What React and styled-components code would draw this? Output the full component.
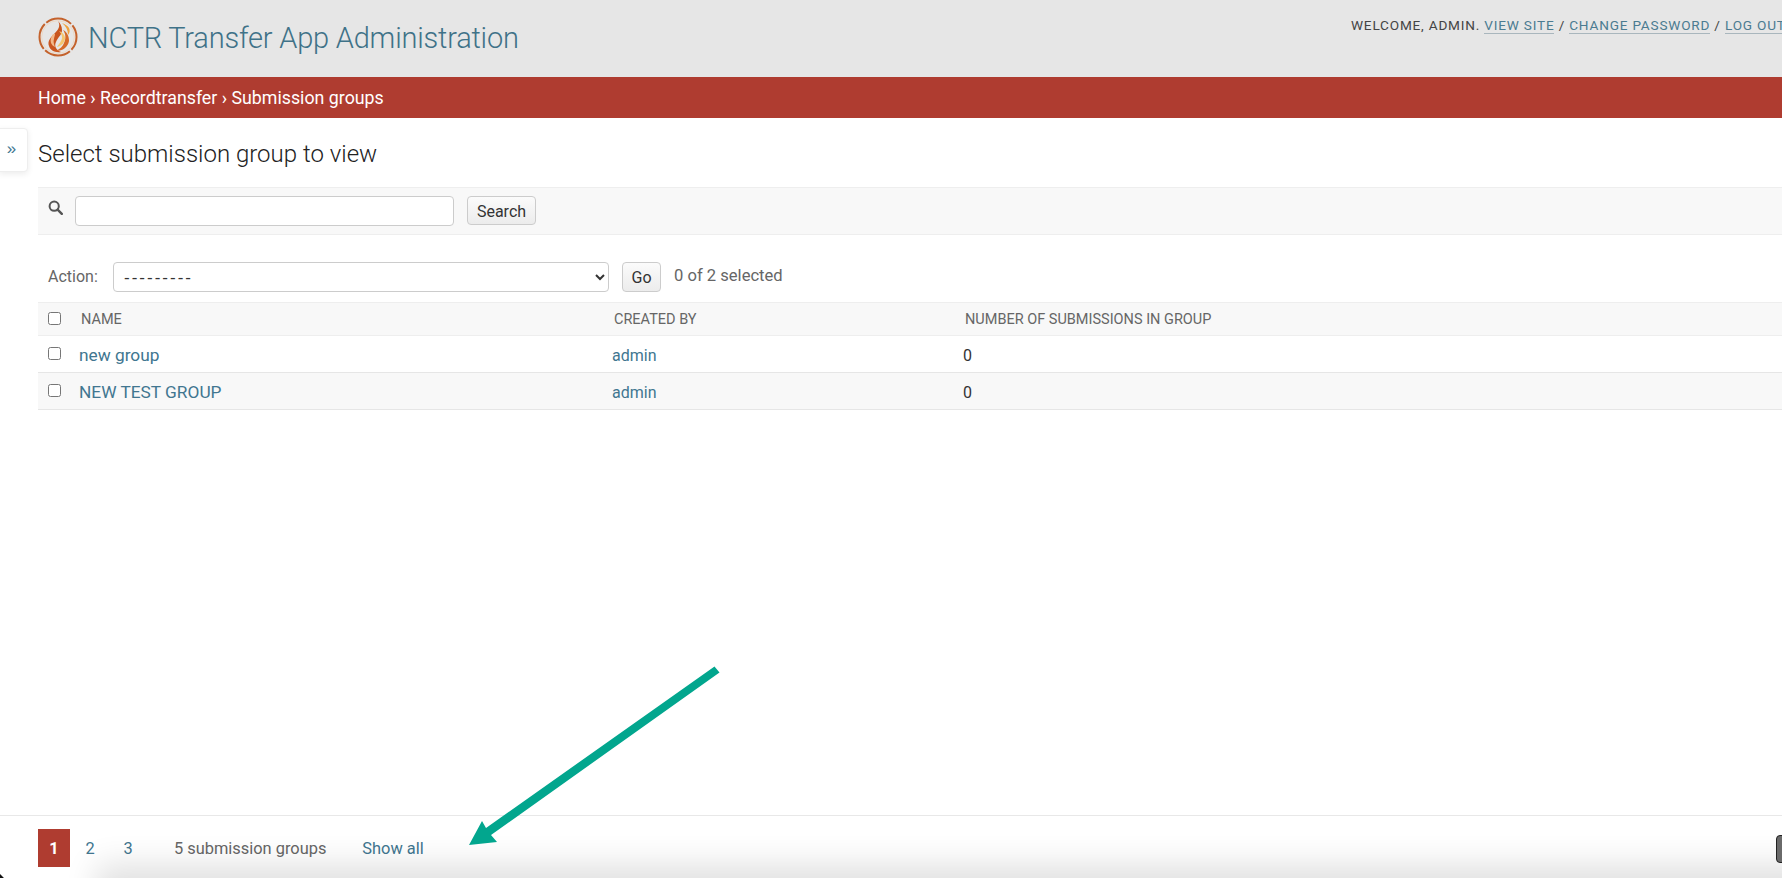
import React from "react";
import styled, { createGlobalStyle } from "styled-components";

const Global = createGlobalStyle`
  html, body {
    margin: 0;
    padding: 0;
    height: 100%;
    overflow: hidden;
    background: #fff;
  }
  body {
    font-family: Roboto, "Liberation Sans", Arial, sans-serif;
    color: #333;
  }
`;

const Page = styled.div`
  position: relative;
  width: 1782px;
  height: 878px;
  overflow: hidden;
  display: flex;
  flex-direction: column;
`;

const Header = styled.header`
  display: flex;
  flex: none;
  height: 77px;
  background: #e6e6e6;
  overflow: hidden;
`;

const Branding = styled.div`
  flex: 0 0 1351px;
  display: flex;
  align-items: flex-start;
  gap: 10px;
  padding: 17px 0 0 38px;
  box-sizing: border-box;
`;

const Title = styled.h1`
  margin: 1px 0 0;
  font-size: 29px;
  line-height: 40px;
  letter-spacing: -0.2px;
  font-weight: 300;
  color: #3f7288;
  white-space: nowrap;
`;

const UserTools = styled.div`
  flex: none;
  padding-top: 17px;
  font-size: 13.6px;
  line-height: 16px;
  letter-spacing: 0.8px;
  color: #444;
  white-space: nowrap;
`;

const ToolLink = styled.a`
  color: #4b7b91;
  border-bottom: 1px solid #a9b6bd;
`;

const Breadcrumbs = styled.nav`
  flex: none;
  height: 41px;
  display: flex;
  align-items: center;
  padding-left: 38px;
  background: #af3c30;
  color: #fff;
  font-size: 17.8px;
  white-space: nowrap;
`;

const Main = styled.main`
  position: relative;
  flex: 1;
  min-height: 0;
  display: flex;
  flex-direction: column;
`;

const SidebarToggle = styled.button`
  position: absolute;
  left: -1px;
  top: 10px;
  width: 29px;
  height: 44px;
  padding: 0 4px 2px 0;
  background: #fff;
  border: 1px solid #eee;
  border-radius: 0 4px 4px 0;
  box-shadow: 0 2px 6px rgba(0, 0, 0, 0.08);
  color: #417690;
  font-size: 17px;
  font-family: "Liberation Sans", Arial, sans-serif;
`;

const Content = styled.div`
  flex: 1;
  padding-left: 38px;
`;

const Heading = styled.h2`
  margin: 0;
  height: 69px;
  box-sizing: border-box;
  padding-top: 21px;
  font-size: 24px;
  line-height: 30px;
  font-weight: 300;
  color: #222;
`;

const Toolbar = styled.div`
  display: flex;
  align-items: flex-start;
  height: 48px;
  box-sizing: border-box;
  padding: 8px 0 0 10px;
  background: #f8f8f8;
  border-top: 1px solid #eee;
  border-bottom: 1px solid #eee;
`;

const SearchIcon = styled.svg`
  flex: none;
  width: 15px;
  height: 15px;
  margin: 4px 12px 0 0;
  color: #555;
`;

const SearchInput = styled.input`
  width: 379px;
  height: 30px;
  box-sizing: border-box;
  padding: 2px 8px;
  background: #fff;
  border: 1px solid #ccc;
  border-radius: 4px;
`;

const Button = styled.button`
  height: ${(p) => (p.$tall ? "30px" : "29px")};
  width: ${(p) => (p.$tall ? "39px" : "69px")};
  padding: ${(p) => (p.$tall ? "0" : "1px 0 0")};
  margin-left: 13px;
  background: linear-gradient(#fbfbfb, #ececec);
  border: 1px solid #ccc;
  border-radius: 4px;
  color: #333;
  font-family: Roboto, "Liberation Sans", Arial, sans-serif;
  font-size: 16px;
`;

const Actions = styled.div`
  display: flex;
  align-items: flex-start;
  height: 67px;
  box-sizing: border-box;
  padding: 27px 0 0 10px;
  color: #666;
  font-size: 16px;
`;

const ActionLabel = styled.label`
  width: 65px;
  line-height: 30px;
`;

const ActionSelect = styled.select`
  width: 496px;
  height: 30px;
  padding: 0 6px;
  background: #fff;
  border: 1px solid #ccc;
  border-radius: 4px;
  color: #333;
  font-family: "Liberation Sans", Arial, sans-serif;
  font-size: 17px;
  letter-spacing: 2px;
`;

const Counter = styled.span`
  margin: -1px 0 0 13px;
  font-size: 16.6px;
  line-height: 30px;
`;

const Table = styled.table`
  width: 100%;
  table-layout: fixed;
  border-collapse: collapse;
`;

const HeadCell = styled.th`
  box-sizing: border-box;
  height: 33px;
  padding: 0 0 0 ${(p) => (p.$text ? "2px" : "10px")};
  background: #f8f8f8;
  border-top: 1px solid #eee;
  border-bottom: 1px solid #eee;
  color: #666;
  font-size: 14.5px;
  font-weight: 400;
  text-align: left;
  text-transform: uppercase;
  width: ${(p) => p.$width || "auto"};
`;

const Row = styled.tr`
  background: ${(p) => (p.$alt ? "#f8f8f8" : "#fff")};
`;

const Cell = styled.td`
  box-sizing: border-box;
  height: 37px;
  padding: ${(p) => (p.$check ? "0 0 0 10px" : "2px 0 0")};
  border-bottom: 1px solid #e6e6e6;
  color: #333;
  font-size: 16px;
`;

const Check = styled.input`
  display: block;
  width: 13px;
  height: 13px;
  margin: -2px 0 0;
`;

const NameLink = styled.a`
  color: #417690;
  font-size: ${(p) => (p.$large ? "17.3px" : "16px")};
`;

const Pagination = styled.footer`
  flex: none;
  height: 63px;
  box-sizing: border-box;
  display: flex;
  align-items: flex-start;
  padding: 13px 0 0 38px;
  border-top: 1px solid #e8e8e8;
  font-size: 16.4px;
  line-height: 39px;
  color: #666;
`;

const CurrentPage = styled.span`
  width: 32px;
  height: 38px;
  margin-right: 1px;
  background: #af3c30;
  color: #fff;
  font-weight: 700;
  text-align: center;
`;

const PageLink = styled.a`
  width: 38px;
  color: #417690;
  text-align: center;
`;

const Count = styled.span`
  margin: 0 36px 0 27px;
`;

const ShowAll = styled.a`
  color: #417690;
`;

const Arrow = styled.svg`
  position: absolute;
  left: 0;
  top: 0;
  pointer-events: none;
`;

const BottomShade = styled.div`
  position: absolute;
  left: 110px;
  right: -80px;
  bottom: -24px;
  height: 24px;
  background: #ccc;
  box-shadow: 0 0 32px 14px rgba(0, 0, 0, 0.12);
  pointer-events: none;
`;

const DockEdge = styled.div`
  position: absolute;
  right: -8px;
  bottom: 15px;
  width: 12px;
  height: 26px;
  background: #6a6a6a;
  border: 1px solid #222;
  border-radius: 4px;
`;

const CornerMark = styled.div`
  position: absolute;
  left: -4px;
  bottom: -4px;
  width: 7px;
  height: 7px;
  background: #111;
  transform: rotate(45deg);
`;

function Logo() {
  return (
    <svg width="40" height="40" viewBox="0 0 40 40" style={{ flex: "none" }}>
      <circle cx="20" cy="20" r="18.5" fill="none" stroke="#c4622c" strokeWidth="2" strokeDasharray="27 2" strokeDashoffset="13" />
      <circle cx="20" cy="20" r="16.4" fill="none" stroke="#edd9c6" strokeWidth="1" />
      <path d="M20 4c3 5 0 9-3 12-4 4-8 8-6 13 1 4 6 7 12 6-5-2-7-6-5-10 2-5 6-7 6-12 0-4-2-7-4-9z" fill="#c9561f" />
      <path d="M25 13c3 4 3 9 1 13-1 3-4 6-8 8 7 0 12-4 13-10 0-5-2-9-6-11z" fill="#d66a28" />
      <path d="M24 6c4 3 6 7 6 12 2-2 2-5 1-7-1-2-4-4-7-5z" fill="#efa23f" />
      <path d="M21 14c3 3 4 7 2 10-1 2-3 4-4 6 5-1 8-5 8-9 0-3-3-6-6-7z" fill="#f5c670" />
      <path d="M15 17c-2 3-3 6-2 9 1 2 2 3 4 4-1-3-2-5-1-8 0-2 1-3 1-5z" fill="#f2b98a" />
    </svg>
  );
}

export default function App() {
  return (
    <Page>
      <Global />
      <Header>
        <Branding>
          <Logo />
          <Title>NCTR Transfer App Administration</Title>
        </Branding>
        <UserTools>
          WELCOME, ADMIN. <ToolLink>VIEW SITE</ToolLink> /{" "}
          <ToolLink>CHANGE PASSWORD</ToolLink> / <ToolLink>LOG OUT</ToolLink>
        </UserTools>
      </Header>
      <Breadcrumbs>Home › Recordtransfer › Submission groups</Breadcrumbs>
      <Main>
        <SidebarToggle>»</SidebarToggle>
        <Content>
          <Heading>Select submission group to view</Heading>
          <Toolbar>
            <SearchIcon viewBox="0 0 15 15" fill="none" stroke="currentColor">
              <circle cx="6.2" cy="6.2" r="4.6" strokeWidth="2" />
              <path d="M9.6 9.6 L13.8 13.8" strokeWidth="2.4" strokeLinecap="round" />
            </SearchIcon>
            <SearchInput type="text" />
            <Button>Search</Button>
          </Toolbar>
          <Actions>
            <ActionLabel>Action:</ActionLabel>
            <ActionSelect>
              <option>---------</option>
            </ActionSelect>
            <Button $tall>Go</Button>
            <Counter>0 of 2 selected</Counter>
          </Actions>
          <Table>
            <thead>
              <tr>
                <HeadCell $width="41px">
                  <Check type="checkbox" />
                </HeadCell>
                <HeadCell $text $width="533px">Name</HeadCell>
                <HeadCell $text $width="351px">Created by</HeadCell>
                <HeadCell $text>Number of submissions in group</HeadCell>
              </tr>
            </thead>
            <tbody>
              <Row>
                <Cell $check><Check type="checkbox" /></Cell>
                <Cell><NameLink $large>new group</NameLink></Cell>
                <Cell><NameLink>admin</NameLink></Cell>
                <Cell>0</Cell>
              </Row>
              <Row $alt>
                <Cell $check><Check type="checkbox" /></Cell>
                <Cell><NameLink $large>NEW TEST GROUP</NameLink></Cell>
                <Cell><NameLink>admin</NameLink></Cell>
                <Cell>0</Cell>
              </Row>
            </tbody>
          </Table>
        </Content>
        <Pagination>
          <CurrentPage>1</CurrentPage>
          <PageLink>2</PageLink>
          <PageLink>3</PageLink>
          <Count>5 submission groups</Count>
          <ShowAll>Show all</ShowAll>
        </Pagination>
      </Main>
      <BottomShade />
      <DockEdge />
      <CornerMark />
      <Arrow width="1782" height="878" viewBox="0 0 1782 878">
        <path d="M714.5 666.5 L719.5 672.5 L491 835 L497 842 L469 845 L482 821 L486 828 Z" fill="#02a68e" />
      </Arrow>
    </Page>
  );
}
